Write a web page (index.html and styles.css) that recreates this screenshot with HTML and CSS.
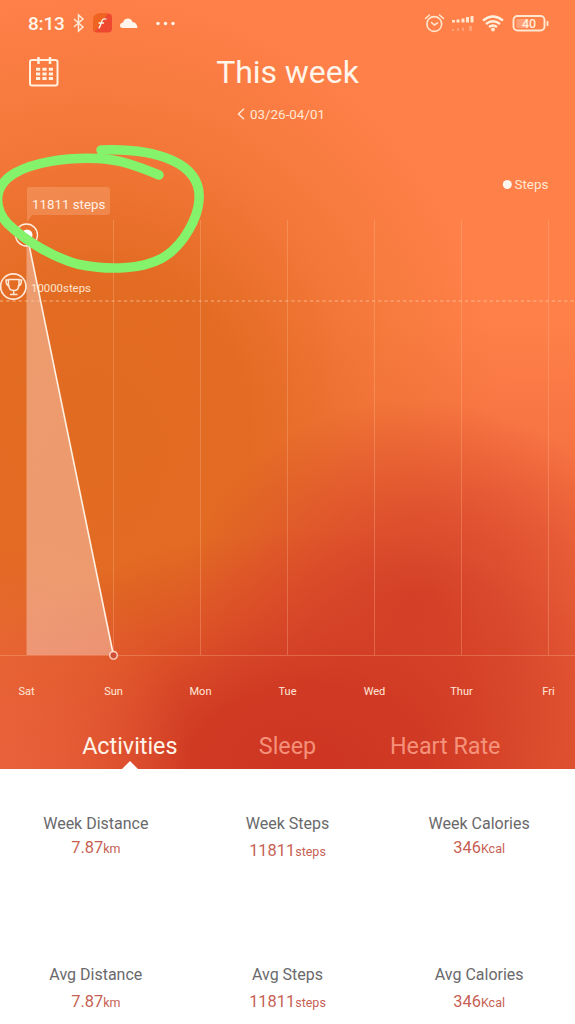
FILE: index.html
```html
<!DOCTYPE html>
<html lang="en">
<head>
<meta charset="utf-8">
<title>This week</title>
<link rel="stylesheet" href="styles.css">
</head>
<body>
<main class="screen">
  <section class="hero">
    <div class="status">
      <span class="clock">8:13</span>
      <svg class="status-left" width="112" height="24" viewBox="0 0 112 24">
        <path d="M4 8l9 8-4.500 4V4L13 8l-9 8" fill="none" stroke="#ffe9d6" stroke-width="1.500"/>
        <path d="M28 2.500h10q4 0 4 4v11q0 4-4 4H27q-4 0-4-4z" fill="#ee4930"/>
        <path d="M23 17.500V9q0-6.500 6-6.500h9L25 20.500q-2-1-2-3z" fill="#f06422"/>
        <path d="M36 8q-3.500-1-4.500 3t-2.500 6M29 12h4.500" fill="none" stroke="#fff4e8" stroke-width="1.300" stroke-linecap="round"/>
        <path d="M53 17q-3 0-3-2.500 0-2.500 3-3 1-4 5-4 3.500 0 4.500 3.500 4.500.5 5 6z" fill="#fff5ea"/>
        <g fill="#fff5ea"><circle cx="88" cy="12.500" r="1.700"/><circle cx="95.500" cy="12.500" r="1.700"/><circle cx="103" cy="12.500" r="1.700"/></g>
      </svg>
      <svg class="status-right" width="130" height="24" viewBox="0 0 130 24">
        <g fill="none" stroke="#ffe6cd" stroke-width="1.600" stroke-linecap="round">
          <circle cx="14.300" cy="13" r="7.400"/><path d="M5.500 7.500l4-3.500M19.500 4l4 3.500M11.500 11.500l2.800 2.500 3.200-2"/>
        </g>
        <g fill="#ffe6cd">
          <path d="M32 9h3v2.500h-3zM36.500 8.500h3v3h-3zM41.500 7.500h3v4h-3zM46 6h3v5.500h-3zM50.500 5h3v6.500h-3z"/>
          <path opacity=".35" d="M32 18h2v2h-2zM37 17h2v3h-2zM42 16.500h2V20h-2zM49 15h3v5h-3z"/>
          <circle cx="73" cy="18.500" r="2"/>
        </g>
        <path d="M63 9.500q10-8 20 0M66 13q7-5.500 14 0M69 16q4-3 8 0" fill="none" stroke="#fff0df" stroke-width="2.300"/>
        <rect x="93.500" y="5" width="31" height="14.500" rx="4" fill="none" stroke="#ffe8d1" stroke-width="1.900"/>
        <rect x="96.500" y="8" width="12" height="9" fill="#fff" opacity=".25"/>
        <path d="M127.500 10v5" stroke="#ffe8d1" stroke-width="1.800"/>
        <text class="battery" x="109" y="17" text-anchor="middle">40</text>
      </svg>
    </div>
    <header class="heading">
      <svg width="32" height="32" viewBox="0 0 32 32">
        <rect x="2" y="4" width="27.500" height="25.500" rx="2" fill="none" stroke="#fff0df" stroke-width="2"/>
        <path d="M10.500 1v7M22 1v7" stroke="#fff0df" stroke-width="2.500"/>
        <path d="M8 13.200h17M8 17.900h17M8 22.600h17" stroke="#fff0df" stroke-width="3" stroke-dasharray="4.200 2.200"/>
      </svg>
      <h1>This week</h1>
    </header>
    <div class="period">
      <svg width="8" height="12" viewBox="0 0 8 12"><path d="M7 .8L1.500 6 7 11.200" fill="none" stroke="#ffe6d0" stroke-width="1.500"/></svg>
      <span>03/26-04/01</span>
    </div>
    <svg class="chart" width="575" height="540" viewBox="0 130 575 540">
      <path d="M113.500 220V655M200.500 220V655M287.500 220V655M374.500 220V655M461.500 220V655M548.500 220V655M0 655.500H575" stroke="#ffc098" stroke-opacity=".3"/>
      <path d="M26.500 235L113.500 655H26.500z" fill="#f8d2c3" fill-opacity=".47"/>
      <path d="M0 301H575" stroke="#ffd2ab" stroke-opacity=".7" stroke-dasharray="3.200 3"/>
      <path d="M30 187h77q3 0 3 3v22q0 3-3 3H32l-5 7v-32q0-3 3-3z" fill="#ffc5a3" fill-opacity=".28"/>
      <text class="tip" x="32" y="208.500">11811 steps</text>
      <circle cx="507.300" cy="184.500" r="4.500" fill="#fff7ee"/>
      <text class="legend" x="514.500" y="189">Steps</text>
      <g fill="none" stroke="#ffe8d8">
        <circle cx="13.300" cy="286.500" r="12.700" stroke-width="1.700"/>
        <path stroke-width="1.500" d="M8.500 279.500h10.500v5q0 6-5.200 6t-5.300-6zM8.500 280H6q0 6 4 6.500M19 280h2.500q0 6-4 6.500M13.700 290.500v3.500M10 294.500h7.500"/>
      </g>
      <text class="goal" x="31" y="292">10000steps</text>
      <path d="M27 235L113 653" stroke="#fff1e3" stroke-width="1.600"/>
      <circle cx="26.500" cy="235" r="11" fill="none" stroke="#fff1e3" stroke-width="1.300"/>
      <circle cx="27" cy="235" r="5.500" fill="#fff"/>
      <circle cx="113.500" cy="655.300" r="3.800" fill="#cf5038" stroke="#ffd9ca" stroke-width="1.400"/>
      <path d="M159 175C137 166 118 159 98 158.500C64 157 33 163 15 173C-9 187-5 210 8 224C27 242 53 257 77 264C105 270 145 271 167 255C184 243 198 218 199 200C202 163 157 148 101 150" fill="none" stroke="#84f26b" stroke-width="9.500" stroke-linecap="round" stroke-linejoin="round"/>
    </svg>
    <div class="days"><span>Sat</span><span>Sun</span><span>Mon</span><span>Tue</span><span>Wed</span><span>Thur</span><span>Fri</span></div>
    <nav class="tabs"><span class="tab active">Activities</span><span class="tab">Sleep</span><span class="tab">Heart Rate</span></nav>
  </section>
  <section class="stats">
    <div class="stat"><h2>Week Distance</h2><p>7.87<small>km</small></p></div>
    <div class="stat low"><h2>Week Steps</h2><p>11811<small>steps</small></p></div>
    <div class="stat"><h2>Week Calories</h2><p>346<small>Kcal</small></p></div>
  </section>
  <section class="stats average">
    <div class="stat"><h2>Avg Distance</h2><p>7.87<small>km</small></p></div>
    <div class="stat"><h2>Avg Steps</h2><p>11811<small>steps</small></p></div>
    <div class="stat"><h2>Avg Calories</h2><p>346<small>Kcal</small></p></div>
  </section>
</main>
</body>
</html>
```
FILE: styles.css
```css
* { box-sizing: border-box; }
body { margin: 0; font-family: Roboto, "Liberation Sans", sans-serif; }
h1, h2, p { margin: 0; font-weight: 400; }
svg { display: block; flex: none; }
.screen { width: 575px; height: 1024px; overflow: hidden; background: #fff; }
.hero {
  height: 769px;
  overflow: hidden;
  color: #fff5ea;
  background:
    radial-gradient(ellipse 190px 230px at 0 769px, rgba(234,98,60,.9), rgba(232,96,58,.55) 45%, rgba(232,96,58,0)),
    radial-gradient(ellipse 230px 200px at 415px 600px, rgba(207,56,36,.8) 0%, rgba(207,56,36,.5) 45%, rgba(207,56,36,0) 100%),
    radial-gradient(ellipse 360px 230px at 305px 760px, #cd3522 0%, rgba(206,54,34,.9) 32%, rgba(212,62,36,.5) 64%, rgba(216,70,40,0) 100%),
    radial-gradient(ellipse 410px 440px at 95px 430px, #e26b22 0%, rgba(226,107,34,.96) 38%, rgba(234,112,44,.55) 66%, rgba(240,120,50,0) 100%),
    linear-gradient(#ff8049 0%, #ff8049 42%, #f26c3f 66%, #e25a35 100%);
}
.status { height: 46px; padding: 11px 20px 0 28px; display: flex; }
.clock { width: 42px; font-size: 19px; line-height: 26px; font-weight: 500; letter-spacing: -.2px; }
.status-right { margin-left: auto; margin-right: 5px; }
.battery { font-size: 12.500px; font-weight: 500; fill: #ffeedd; }
.heading { height: 52px; padding: 10px 28px 0; display: grid; grid-template-columns: 32px 1fr 32px; }
h1 { font-size: 32px; line-height: 32px; text-align: center; letter-spacing: -.05px; }
.period { height: 32px; display: flex; justify-content: center; align-items: center; gap: 5px; padding-right: 13px; font-size: 13.400px; color: #ffe9d6; }
.tip { font-size: 13.300px; fill: #fff0e4; }
.legend { font-size: 13.400px; fill: #ffe9d4; }
.goal { font-size: 11.400px; fill: #ffe3cd; }
.days { width: 609px; margin-left: -17px; height: 50px; padding-top: 14px; display: grid; grid-template-columns: repeat(7, 87px); text-align: center; font-size: 11px; line-height: 15px; color: #ffe8da; }
.tabs { height: 49px; padding: 0 51px; display: grid; grid-template-columns: repeat(3, 1fr); text-align: center; }
.tab { font-size: 23.300px; line-height: 52px; color: #ffa891; opacity: .8; }
.active { color: #fff4e9; opacity: 1; display: flex; flex-direction: column; align-items: center; }
.active::after { content: ""; margin-top: -11px; border: 8px solid transparent; border-top: 0; border-bottom-color: #fff; }
.stats { height: 151px; padding-top: 44px; display: grid; grid-template-columns: repeat(3, 1fr); text-align: center; }
.stat h2 { font-size: 16px; line-height: 22px; color: #69696b; }
.stat p { font-size: 16.400px; line-height: 22px; margin-top: 2px; color: #c75f54; }
.stat small { font-size: 12.500px; }
.stat.low p { margin-top: 5px; }
.average { height: 104px; }
.average .stat p { margin-top: 5px; }
```
